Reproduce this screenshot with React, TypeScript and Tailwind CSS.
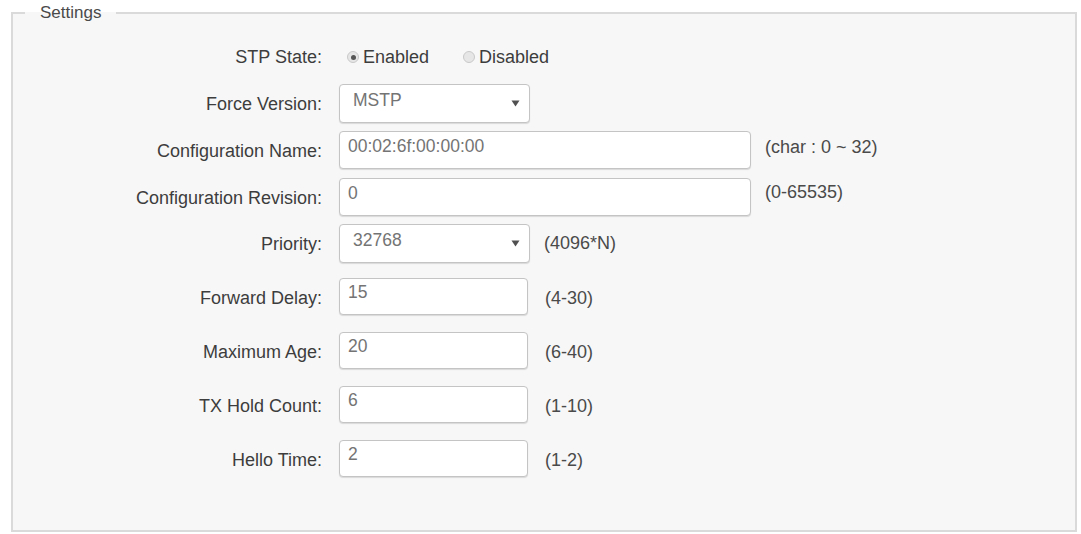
import React from "react";

const Label: React.FC<{ text: string }> = ({ text }) => (
  <div className="w-[309px] shrink-0 pt-[7px] text-right text-[18px] text-[#3d3d3d]">
    {text}
  </div>
);

const Hint: React.FC<{ text: string; className?: string }> = ({ text, className }) => (
  <div className={`text-[18px] text-[#4a4a4a] ${className ?? ""}`}>{text}</div>
);

const TextBox: React.FC<{ value: string; width: string }> = ({ value, width }) => (
  <input
    readOnly
    defaultValue={value}
    className={`${width} h-full rounded-[4px] border border-[#c4c4c4] bg-white pl-[8px] pb-[8px] text-[17.5px] text-[#747474] shadow-[0_1px_1px_rgba(0,0,0,0.12)] outline-none`}
  />
);

const SelectBox: React.FC<{ value: string }> = ({ value }) => (
  <div className="flex h-full w-[191px] items-center justify-between rounded-[4px] border border-[#c4c4c4] bg-white pl-[13px] pr-[9px] pb-[6px] text-[17.5px] text-[#747474] shadow-[0_1px_1px_rgba(0,0,0,0.12)]">
    <span>{value}</span>
    <svg width="9" height="7" viewBox="0 0 9 7" className="mt-[6px]">
      <path d="M0.5 0.5 L8.5 0.5 L4.5 6.5 Z" fill="#505050" />
    </svg>
  </div>
);

const Radio: React.FC<{ checked: boolean; label: string }> = ({ checked, label }) => (
  <div className="flex items-center gap-[4px]">
    <span className="flex h-[12px] w-[12px] items-center justify-center rounded-full border border-[#c9c9c9] bg-[#e6e6e6]">
      {checked && <span className="h-[5px] w-[5px] rounded-full bg-[#555]" />}
    </span>
    <span className="text-[18px] text-[#3d3d3d]">{label}</span>
  </div>
);

export default function App() {
  return (
    <div className="min-h-screen bg-white pt-[3px] font-['Liberation_Sans',Arial,sans-serif]">
      <fieldset className="ml-[11px] mr-[4px] h-[529px] border-2 border-[#dadada] bg-[#f7f7f7]">
        <legend className="ml-[12px] px-[15px] text-[17px] leading-[20px] text-[#4a4a4a]">
          Settings
        </legend>

        <div className="flex flex-col pt-[19px]">
          <div className="flex h-[30px] items-center">
            <div className="w-[309px] shrink-0 text-right text-[18px] text-[#3d3d3d]">
              STP State:
            </div>
            <div className="ml-[25px] flex items-center gap-[34px]">
              <Radio checked label="Enabled" />
              <Radio checked={false} label="Disabled" />
            </div>
          </div>

          <div className="mt-[12px] flex h-[39px] items-start gap-[17px]">
            <Label text="Force Version:" />
            <SelectBox value="MSTP" />
          </div>

          <div className="mt-[8px] flex h-[38px] items-start gap-[17px]">
            <Label text="Configuration Name:" />
            <TextBox value="00:02:6f:00:00:00" width="w-[412px]" />
            <Hint text="(char : 0 ~ 32)" className="pt-[3px] -ml-[3px]" />
          </div>

          <div className="mt-[9px] flex h-[38px] items-start gap-[17px]">
            <Label text="Configuration Revision:" />
            <TextBox value="0" width="w-[412px]" />
            <Hint text="(0-65535)" className="pt-[1px] -ml-[3px]" />
          </div>

          <div className="mt-[8px] flex h-[39px] items-start gap-[17px]">
            <Label text="Priority:" />
            <SelectBox value="32768" />
            <Hint text="(4096*N)" className="pt-[6px] -ml-[3px]" />
          </div>

          <div className="mt-[15px] flex h-[37px] items-start gap-[17px]">
            <Label text="Forward Delay:" />
            <TextBox value="15" width="w-[189px]" />
            <Hint text="(4-30)" className="pt-[7px]" />
          </div>

          <div className="mt-[17px] flex h-[37px] items-start gap-[17px]">
            <Label text="Maximum Age:" />
            <TextBox value="20" width="w-[189px]" />
            <Hint text="(6-40)" className="pt-[7px]" />
          </div>

          <div className="mt-[17px] flex h-[37px] items-start gap-[17px]">
            <Label text="TX Hold Count:" />
            <TextBox value="6" width="w-[189px]" />
            <Hint text="(1-10)" className="pt-[7px]" />
          </div>

          <div className="mt-[17px] flex h-[37px] items-start gap-[17px]">
            <Label text="Hello Time:" />
            <TextBox value="2" width="w-[189px]" />
            <Hint text="(1-2)" className="pt-[7px]" />
          </div>
        </div>
      </fieldset>
    </div>
  );
}
